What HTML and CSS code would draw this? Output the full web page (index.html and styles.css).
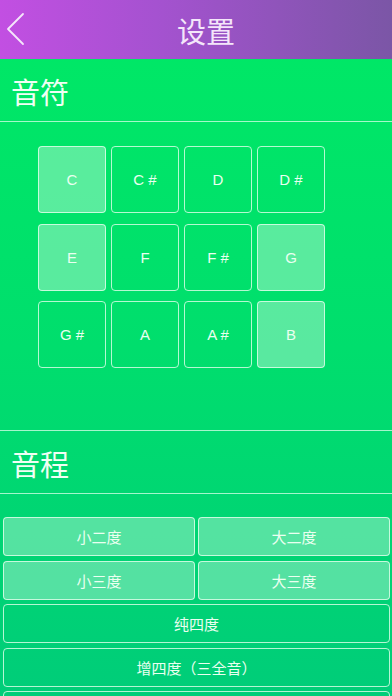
FILE: index.html
```html
<!DOCTYPE html>
<html lang="zh">
<head>
<meta charset="utf-8">
<link rel="stylesheet" href="styles.css">
</head>
<body>
<div class="page">
  <header class="nav">
    <svg class="back" width="20" height="34" viewBox="0 0 20 34"><path d="M17 2 L2 17 L17 32" fill="none" stroke="#f4e6fa" stroke-width="1.8" stroke-linecap="round" stroke-linejoin="round"/></svg>
    <h1 class="nav-title">设置</h1>
  </header>

  <section class="sec-head"><h2>音符</h2></section>
  <div class="notes">
    <div class="tile on">C</div>
    <div class="tile">C #</div>
    <div class="tile">D</div>
    <div class="tile">D #</div>
    <div class="tile on">E</div>
    <div class="tile">F</div>
    <div class="tile">F #</div>
    <div class="tile on">G</div>
    <div class="tile">G #</div>
    <div class="tile">A</div>
    <div class="tile">A #</div>
    <div class="tile on">B</div>
  </div>

  <section class="sec-head"><h2>音程</h2></section>
  <div class="intervals">
    <div class="btn on">小二度</div>
    <div class="btn on">大二度</div>
    <div class="btn on">小三度</div>
    <div class="btn on">大三度</div>
    <div class="btn wide">纯四度</div>
    <div class="btn wide">增四度（三全音）</div>
    <div class="btn wide"></div>
  </div>
</div>
</body>
</html>
```
FILE: styles.css
```css
html, body { margin: 0; padding: 0; }
body {
  width: 392px;
  height: 696px;
  overflow: hidden;
  font-family: "Liberation Sans", "Noto Sans CJK SC", sans-serif;
}
.page {
  height: 696px;
  background: linear-gradient(180deg, #00e965 0%, #00de6d 50%, #00cd79 100%);
  color: #eafff0;
}
.nav {
  height: 59px;
  background: linear-gradient(90deg, #c24fe2 0%, #a552d0 40%, #7b56a6 100%);
  display: flex;
  align-items: center;
  position: relative;
}
.back {
  position: absolute;
  left: 6px;
  top: 12px;
}
.nav-title {
  margin: 0;
  flex: 1;
  text-align: center;
  padding-left: 20px;
  font-family: "Noto Sans CJK SC", sans-serif;
  font-weight: 400;
  font-size: 29px;
  color: #f4e6fa;
}
.sec-head {
  height: 61px;
  border-bottom: 1px solid rgba(220, 255, 235, 0.75);
  display: flex;
  align-items: center;
  padding-left: 11px;
  padding-top: 1px;
}
.sec-head h2 {
  margin: 0;
  font-family: "Noto Sans CJK SC", sans-serif;
  font-weight: 400;
  font-size: 29px;
  color: #f0fff4;
}
.notes {
  height: 309px;
  box-sizing: border-box;
  border-bottom: 1px solid rgba(220, 255, 235, 0.75);
  padding: 24px 0 0 38px;
  display: grid;
  grid-template-columns: repeat(4, 68px);
  grid-auto-rows: 67px;
  column-gap: 5px;
  row-gap: 10.5px;
  align-content: start;
}
.tile {
  box-sizing: border-box;
  border: 1px solid rgba(225, 255, 235, 0.8);
  border-radius: 4px;
  display: flex;
  align-items: center;
  justify-content: center;
  font-size: 15px;
  color: #eafff0;
}
.tile.on { background: rgba(255, 255, 255, 0.35); }
.intervals {
  padding: 23px 2px 0 3px;
  display: grid;
  grid-template-columns: 1fr 1fr;
  grid-auto-rows: 39px;
  column-gap: 3px;
  row-gap: 4.5px;
}
.btn {
  box-sizing: border-box;
  border: 1px solid rgba(225, 255, 235, 0.8);
  border-radius: 4px;
  display: flex;
  align-items: center;
  justify-content: center;
  font-family: "Noto Sans CJK SC", sans-serif;
  font-size: 15px;
  color: #eafff0;
}
.btn.on { background: rgba(255, 255, 255, 0.33); }
.btn.wide { grid-column: 1 / 3; }
```
